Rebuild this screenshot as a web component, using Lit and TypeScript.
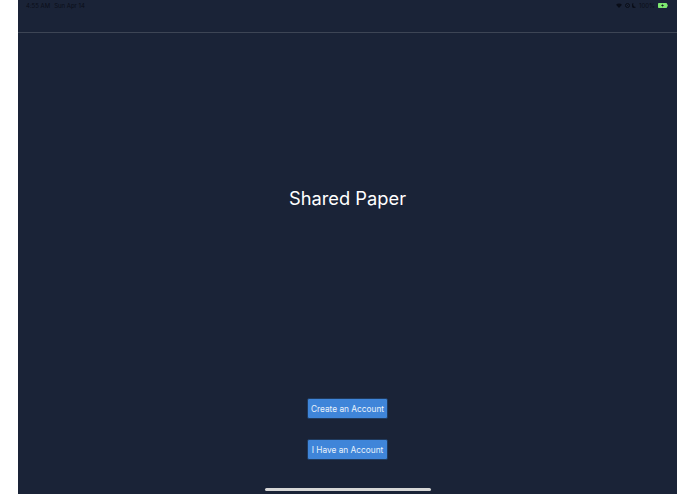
import { LitElement, html, css } from "lit";
import { customElement } from "lit/decorators.js";

@customElement("app-root")
export class AppRoot extends LitElement {
  static styles = css`
    :host {
      display: flex;
      justify-content: center;
      width: 695px;
      height: 494px;
      background: #ffffff;
      font-family: Inter, "Liberation Sans", sans-serif;
    }
    .screen {
      position: relative;
      width: 659px;
      height: 494px;
      background: #1a2337;
      display: flex;
      flex-direction: column;
      box-sizing: border-box;
    }
    .header {
      height: 33px;
      box-sizing: border-box;
      border-bottom: 1px solid #3d4555;
      padding: 1px 9px 0 8px;
      display: flex;
      justify-content: space-between;
      align-items: flex-start;
      flex: none;
    }
    .status {
      display: flex;
      align-items: center;
      height: 9px;
      font-size: 6px;
      color: #0a0e19;
      white-space: nowrap;
    }
    .time { margin-right: 4px; }
    .right { gap: 3px; }
    .moon { margin-left: -1px; }
    .status svg { display: block; }
    .title {
      margin: 153px 0 0;
      height: 24px;
      line-height: 24px;
      text-align: center;
      font-size: 18.3px;
      font-weight: 400;
      color: #ffffff;
    }
    .actions {
      margin-top: 188px;
      display: flex;
      flex-direction: column;
      align-items: center;
      gap: 20px;
    }
    button {
      width: 81px;
      height: 21px;
      padding: 0;
      border: 1px solid #1f3a5e;
      border-radius: 2px;
      background: #3f85d9;
      color: #eaf2fb;
      font-family: inherit;
      font-size: 8.3px;
      line-height: 18px;
      text-align: center;
      box-sizing: border-box;
    }
    .home {
      position: absolute;
      left: 247px;
      bottom: 3px;
      width: 166px;
      height: 3px;
      border-radius: 2px;
      background: #d6d6d6;
    }
  `;

  render() {
    return html`
      <div class="screen">
        <div class="header">
          <div class="status">
            <span class="time">4:55 AM</span>
            <span>Sun Apr 14</span>
          </div>
          <div class="status right">
            <svg width="6" height="5" viewBox="0 0 14 12" fill="#0a0e19">
              <path d="M0 4 C4 0 10 0 14 4 L7 12 Z" />
            </svg>
            <svg width="5" height="5" viewBox="0 0 10 10" fill="none" stroke="#0a0e19" stroke-width="2">
              <circle cx="5" cy="5" r="4" />
              <circle cx="5" cy="5" r="1" fill="#0a0e19" stroke="none" />
            </svg>
            <svg class="moon" width="4" height="5" viewBox="0 0 8 10" fill="#0a0e19">
              <path d="M3 0 A5 5 0 1 0 8 8 A5.5 5.5 0 0 1 3 0 Z" />
            </svg>
            <span>100%</span>
            <svg width="10" height="5" viewBox="0 0 20 10">
              <rect x="0" y="0" width="18" height="10" rx="1.5" fill="#7de86f" />
              <rect x="18.5" y="3" width="1.5" height="4" fill="#7de86f" />
              <path d="M10 1 L6 6 H9 L8 9 L12 4 H9 Z" fill="#10151f" />
            </svg>
          </div>
        </div>
        <h1 class="title">Shared Paper</h1>
        <div class="actions">
          <button>Create an Account</button>
          <button>I Have an Account</button>
        </div>
        <div class="home"></div>
      </div>
    `;
  }
}
